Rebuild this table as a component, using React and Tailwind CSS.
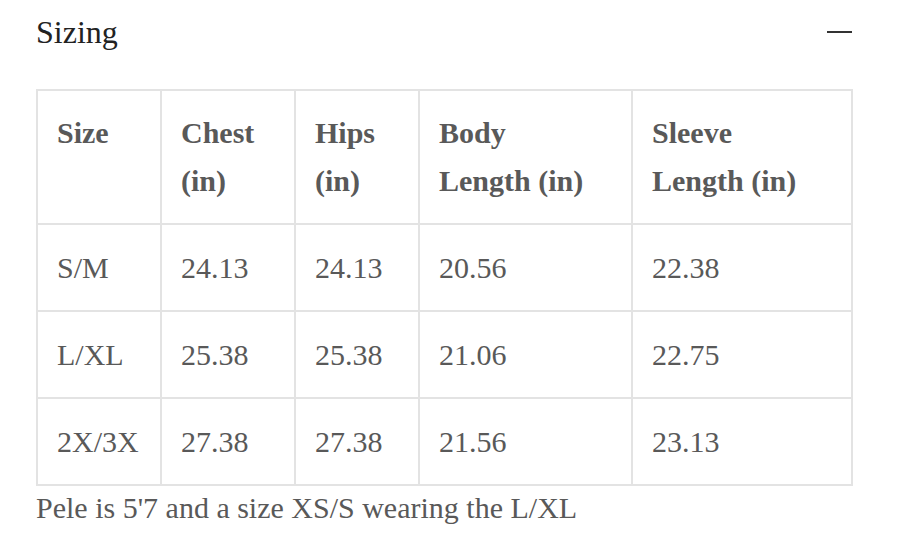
import React from "react";

const headers = [
  { label: ["Size"], w: "w-[124px]" },
  { label: ["Chest", "(in)"], w: "w-[134px]" },
  { label: ["Hips", "(in)"], w: "w-[124px]" },
  { label: ["Body", "Length (in)"], w: "w-[213px]" },
  { label: ["Sleeve", "Length (in)"], w: "w-[220px]" },
];

const rows = [
  ["S/M", "24.13", "24.13", "20.56", "22.38"],
  ["L/XL", "25.38", "25.38", "21.06", "22.75"],
  ["2X/3X", "27.38", "27.38", "21.56", "23.13"],
];

export default function App() {
  return (
    <div className="min-h-screen bg-white font-['Liberation_Serif',serif]">
      <div className="ml-[36px] w-[816px] pt-[12px]">
        {/* accordion header */}
        <div className="flex items-center justify-between">
          <h2 className="text-[32px] leading-[40px] text-[#222]">Sizing</h2>
          <span className="block w-[25px] h-[2px] bg-[#333]" />
        </div>

        <table className="mt-[37px] w-[816px] table-fixed border-collapse border-2 border-[#e3e3e3] text-[#595959]">
          <thead>
            <tr>
              {headers.map((h) => (
                <th
                  key={h.label.join(" ")}
                  className={`${h.w} h-[134px] border-2 border-[#e3e3e3] px-[19px] text-left align-top pt-[18px] text-[30px] leading-[48px] font-bold`}
                >
                  {h.label.map((l) => (
                    <div key={l} className="whitespace-nowrap">{l}</div>
                  ))}
                </th>
              ))}
            </tr>
          </thead>
          <tbody>
            {rows.map((r) => (
              <tr key={r[0]}>
                {r.map((c, i) => (
                  <td
                    key={i}
                    className="h-[87px] border-2 border-[#e3e3e3] px-[19px] text-left align-middle text-[30px] leading-[48px]"
                  >
                    {c}
                  </td>
                ))}
              </tr>
            ))}
          </tbody>
        </table>

        <p className="text-[30px] leading-[40px] pt-[2px] text-[#595959]">
          Pele is 5'7 and a size XS/S wearing the L/XL
        </p>
      </div>
    </div>
  );
}
